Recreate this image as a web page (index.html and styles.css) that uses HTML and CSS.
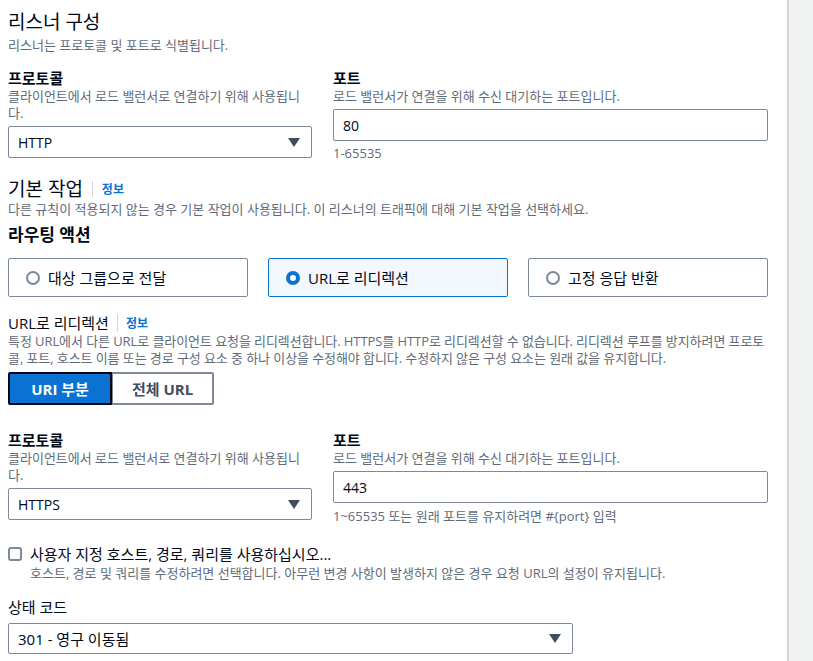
FILE: index.html
```html
<!DOCTYPE html>
<html>
<head>
<meta charset="utf-8">
<link rel="stylesheet" href="styles.css">
</head>
<body>
<div class="page">
  <main class="main">
    <h1 class="h1">리스너 구성</h1>
    <p class="desc sub">리스너는 프로토콜 및 포트로 식별됩니다.</p>

    <div class="row row-first">
      <div class="field col-left">
        <div class="label">프로토콜</div>
        <div class="desc fdesc">클라이언트에서 로드 밸런서로 연결하기 위해 사용됩니다.</div>
        <div class="select"><span class="val">HTTP</span><span class="caret"></span></div>
      </div>
      <div class="field col-right">
        <div class="label">포트</div>
        <div class="desc fdesc">로드 밸런서가 연결을 위해 수신 대기하는 포트입니다.</div>
        <div class="input">80</div>
        <div class="hint">1-65535</div>
      </div>
    </div>

    <div class="h2-row">
      <h2 class="h2">기본 작업</h2>
      <span class="divider"></span>
      <a class="info">정보</a>
    </div>
    <p class="desc">다른 규칙이 적용되지 않는 경우 기본 작업이 사용됩니다. 이 리스너의 트래픽에 대해 기본 작업을 선택하세요.</p>

    <h3 class="h3">라우팅 액션</h3>
    <div class="tiles">
      <div class="tile"><span class="radio"></span><span>대상 그룹으로 전달</span></div>
      <div class="tile tile-on"><span class="radio radio-on"></span><span>URL로 리디렉션</span></div>
      <div class="tile"><span class="radio"></span><span>고정 응답 반환</span></div>
    </div>

    <div class="h4-row">
      <span class="h4">URL로 리디렉션</span>
      <span class="divider divider-sm"></span>
      <a class="info">정보</a>
    </div>
    <p class="desc desc-tight">특정 URL에서 다른 URL로 클라이언트 요청을 리디렉션합니다. HTTPS를 HTTP로 리디렉션할 수 없습니다. 리디렉션 루프를 방지하려면 프로토콜, 포트, 호스트 이름 또는 경로 구성 요소 중 하나 이상을 수정해야 합니다. 수정하지 않은 구성 요소는 원래 값을 유지합니다.</p>

    <div class="seg">
      <button class="seg-btn seg-on">URI 부분</button>
      <button class="seg-btn">전체 URL</button>
    </div>

    <div class="row row-second">
      <div class="field col-left">
        <div class="label">프로토콜</div>
        <div class="desc fdesc">클라이언트에서 로드 밸런서로 연결하기 위해 사용됩니다.</div>
        <div class="select"><span class="val">HTTPS</span><span class="caret"></span></div>
      </div>
      <div class="field col-right">
        <div class="label">포트</div>
        <div class="desc fdesc">로드 밸런서가 연결을 위해 수신 대기하는 포트입니다.</div>
        <div class="input">443</div>
        <div class="hint">1~65535 또는 원래 포트를 유지하려면 #{port} 입력</div>
      </div>
    </div>

    <div class="check-row">
      <span class="checkbox"></span>
      <div>
        <div class="check-label">사용자 지정 호스트, 경로, 쿼리를 사용하십시오...</div>
        <div class="desc">호스트, 경로 및 쿼리를 수정하려면 선택합니다. 아무런 변경 사항이 발생하지 않은 경우 요청 URL의 설정이 유지됩니다.</div>
      </div>
    </div>

    <div class="status">
      <div class="label label-normal">상태 코드</div>
      <div class="select select-wide"><span class="val">301 - 영구 이동됨</span><span class="caret"></span></div>
    </div>
  </main>
  <aside class="side"></aside>
</div>
</body>
</html>
```

FILE: styles.css
```css
* { box-sizing: border-box; }
html, body { margin: 0; padding: 0; background: #fff; }
body {
  font-family: "Open Sans", "Noto Sans CJK KR", sans-serif;
  color: #000716;
  width: 813px;
  height: 661px;
  overflow: hidden;
}
.page { display: flex; height: 661px; }
.main {
  width: 789px;
  flex: none;
  padding: 9px 21px 0 8px;
  border-right: 2px solid #d1d5db;
  background: #fff;
}
.side { flex: 1; background: #f1f2f2; }

.h1 {
  font-size: 19px;
  font-weight: 400;
  line-height: 26px;
  margin: 0;
  color: #000716;
}
.desc {
  font-size: 13px;
  line-height: 17px;
  color: #5f6b7a;
  margin: 0;
}
.desc-tight { letter-spacing: -0.08px; }
.sub { margin-top: 2px; }
.row {
  display: grid;
  grid-template-columns: 304px 435px;
  column-gap: 21px;
}
.row-first { margin-top: 14px; }
.row-second { margin-top: 25px; }
.label {
  font-size: 15px;
  font-weight: 700;
  line-height: 20px;
}
.label-normal { font-weight: 400; }
.fdesc { margin-top: 0; margin-bottom: 4px; }
.select {
  height: 32px;
  border: 1px solid #7d8998;
  border-radius: 2px;
  display: flex;
  align-items: center;
  justify-content: space-between;
  padding: 0 11px 0 9px;
  font-size: 15px;
  color: #000716;
}
.val { font-size: 14px; }
.select-wide .val { font-size: 15px; }
.caret {
  width: 0; height: 0;
  border-left: 6px solid transparent;
  border-right: 6px solid transparent;
  border-top: 9px solid #414d5c;
}
.input {
  height: 32px;
  border: 1px solid #7d8998;
  border-radius: 2px;
  padding: 0 9px;
  display: flex;
  align-items: center;
  font-size: 14px;
}
.hint {
  font-size: 13px;
  line-height: 17px;
  color: #5f6b7a;
  margin-top: 4px;
}
.row-second .hint { margin-top: 5px; }
.h2-row {
  display: flex;
  align-items: center;
  margin-top: 15px;
}
.h2 {
  font-size: 19px;
  font-weight: 400;
  line-height: 24px;
  margin: 0;
}
.divider {
  width: 1px;
  height: 16px;
  background: #d1d5db;
  margin: 0 9px 0 9px;
}
.divider-sm { height: 18px; margin: 0 8px 0 8px; }
.info {
  font-size: 12px;
  font-weight: 700;
  color: #0972d3;
}
.h3 {
  font-size: 17px;
  font-weight: 700;
  line-height: 22px;
  margin: 6px 0 0;
}
.tiles {
  display: grid;
  grid-template-columns: repeat(3, 240px);
  column-gap: 20px;
  margin-top: 12px;
}
.tile {
  height: 39px;
  border: 1px solid #7d8998;
  border-radius: 2px;
  display: flex;
  align-items: center;
  gap: 8px;
  padding-left: 17px;
  font-size: 15px;
}
.tile-on {
  border-color: #0972d3;
  background: #f2f8fd;
}
.radio {
  width: 14px; height: 14px;
  border-radius: 50%;
  border: 2px solid #7d8998;
  flex: none;
}
.radio-on {
  border: 4px solid #0972d3;
  background: #fff;
}
.h4-row {
  display: flex;
  align-items: center;
  margin-top: 16px;
}
.h4 { font-size: 15px; line-height: 20px; }
.seg {
  display: flex;
  margin-top: 5px;
}
.seg-btn {
  font-family: inherit;
  font-size: 15px;
  font-weight: 700;
  height: 33px;
  border: 2px solid #7d8998;
  background: #fff;
  color: #414d5c;
  padding: 0;
  margin: 0;
  width: 102px;
  border-radius: 0 2px 2px 0;
  border-left-width: 1px;
}
.seg-on {
  width: 104px;
  background: #0972d3;
  color: #fff;
  border: 2px solid #000716;
  border-radius: 2px 0 0 2px;
}
.check-row {
  display: flex;
  align-items: flex-start;
  gap: 8px;
  margin-top: 19px;
}
.checkbox {
  width: 14px; height: 14px;
  border: 2px solid #7d8998;
  border-radius: 3px;
  margin-top: 3px;
  flex: none;
}
.check-label { font-size: 15px; line-height: 20px; }
.check-row .desc { line-height: 18px; }
.status { margin-top: 15px; width: 565px; }
.status .select { margin-top: 6px; height: 31px; }
```
